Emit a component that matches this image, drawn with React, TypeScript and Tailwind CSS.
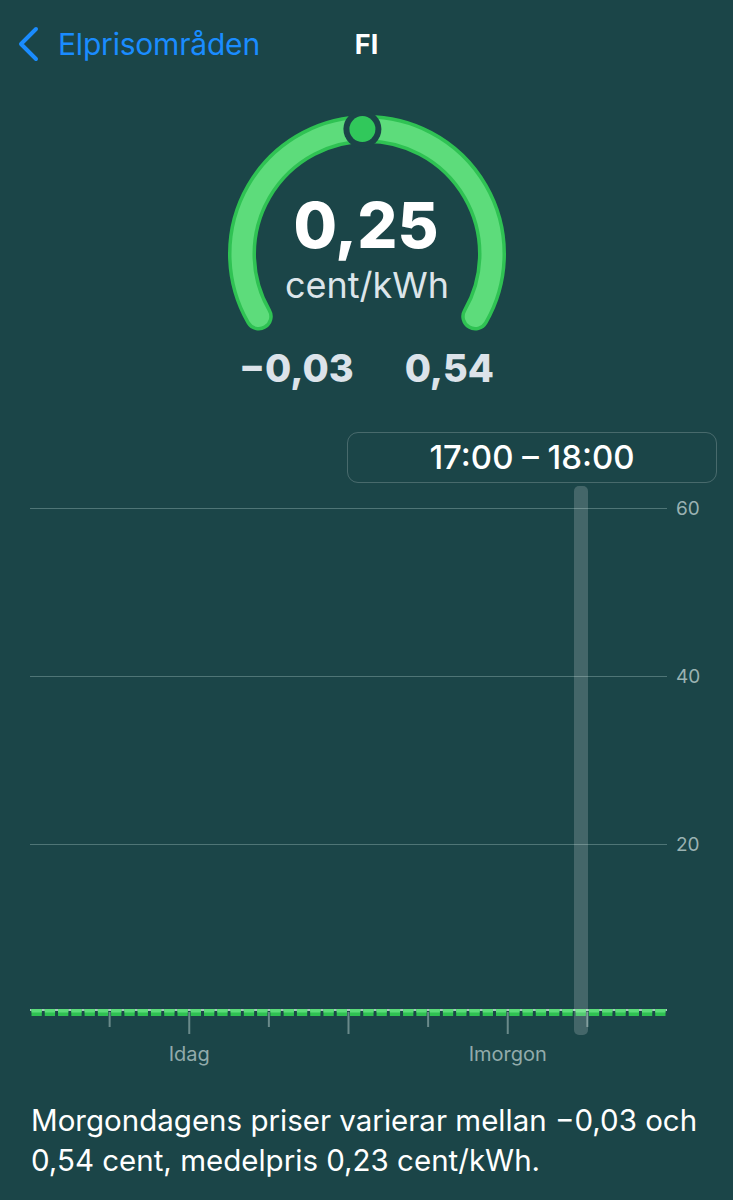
import React from "react";

const BG = "#1b4548";

function Gauge() {
  const cx = 150, cy = 154, r = 125;
  const a = (210 - ((0.25 + 0.03) / 0.57) * 240) * (Math.PI / 180);
  const dx = cx + r * Math.cos(a);
  const dy = cy - r * Math.sin(a);
  const path = `M ${cx + r * Math.cos((210 * Math.PI) / 180)} ${cy - r * Math.sin((210 * Math.PI) / 180)} A ${r} ${r} 0 1 1 ${cx + r * Math.cos((-30 * Math.PI) / 180)} ${cy - r * Math.sin((-30 * Math.PI) / 180)}`;
  return (
    <svg width="300" height="240" viewBox="0 0 300 240" className="block">
      <path d={path} fill="none" stroke="#2fc253" strokeWidth="28" strokeLinecap="round" />
      <path d={path} fill="none" stroke="#5ddc7b" strokeWidth="21" strokeLinecap="round" />
      <circle cx={dx} cy={dy} r="19" fill={BG} />
      <circle cx={dx} cy={dy} r="13" fill="#31c85b" />
      <text x="149" y="148" textAnchor="middle" fill="#ffffff" fontFamily="Inter, 'Liberation Sans', sans-serif" fontWeight="800" fontSize="63">0,25</text>
      <text x="150" y="198" textAnchor="middle" fill="#dde5ea" fontFamily="Inter, 'Liberation Sans', sans-serif" fontWeight="400" fontSize="36">cent/kWh</text>
    </svg>
  );
}

function Chart() {
  const top = 484;
  const x0 = 30, x1 = 667;
  const bw = (x1 - x0) / 48;
  const y0 = 1013 - top;
  const grid = [
    { v: "60", y: 509 - top },
    { v: "40", y: 677 - top },
    { v: "20", y: 845 - top },
  ];
  const ticks = [6, 12, 18, 24, 30, 36, 42];
  return (
    <svg width="733" height="596" viewBox="0 0 733 596" className="block">
      {grid.map((g) => (
        <g key={g.v}>
          <line x1={x0} x2={x1} y1={g.y + 0.5} y2={g.y + 0.5} stroke="#4f7576" strokeWidth="1" />
          <text x="676" y={g.y + 7} fill="#9ab2b2" fontFamily="Inter, 'Liberation Sans', sans-serif" fontSize="19">{g.v}</text>
        </g>
      ))}
      {ticks.map((h) => (
        <line key={h} x1={x0 + h * bw} x2={x0 + h * bw} y1={y0} y2={h % 12 === 0 ? y0 + 22 : y0 + 15} stroke="#6a8a8a" strokeWidth="2" />
      ))}
      <line x1={x0} x2={x1} y1={y0 - 2} y2={y0 - 2} stroke="#a9c2bf" strokeWidth="2" />
      {Array.from({ length: 48 }).map((_, i) => (
        <g key={i}>
          <rect x={x0 + i * bw + 1.5} y={y0 - 3} width={bw - 3} height="7" fill="#2fc152" />
          <rect x={x0 + i * bw + 1.5} y={y0 - 3} width={bw - 3} height="3.5" fill="#5bdc79" />
        </g>
      ))}
      <rect x="574" y={487 - top} width="14" height={1036 - 487} rx="5" fill="rgba(255,255,255,0.18)" />
      <text x={x0 + 12 * bw} y={1062 - top} textAnchor="middle" fill="#92abab" fontFamily="Inter, 'Liberation Sans', sans-serif" fontSize="20">Idag</text>
      <text x={x0 + 36 * bw} y={1062 - top} textAnchor="middle" fill="#92abab" fontFamily="Inter, 'Liberation Sans', sans-serif" fontSize="20">Imorgon</text>
    </svg>
  );
}

export default function App() {
  return (
    <div className="w-[733px] h-[1200px] overflow-hidden bg-[#1b4548] text-white" style={{ fontFamily: "Inter, 'Liberation Sans', sans-serif" }}>
      <div className="grid grid-cols-[1fr_auto_1fr] items-center h-[88px]">
        <div className="flex items-center pl-[17px] gap-[19px]">
          <svg width="22" height="36" viewBox="0 0 22 36">
            <polyline points="19,3 4,18 19,33" fill="none" stroke="#1a8cff" strokeWidth="4" strokeLinecap="round" strokeLinejoin="round" />
          </svg>
          <span className="text-[30px] text-[#1a8cff] leading-none tracking-[-0.2px]">Elprisområden</span>
        </div>
        <span className="text-[27px] font-bold leading-none">FI</span>
        <div />
      </div>
      <div className="flex justify-center mt-[12px] pl-[1px]">
        <Gauge />
      </div>
      <div className="flex justify-center gap-[51px] mt-[9px] text-[38px] font-extrabold leading-none text-[#dce3ea]">
        <span>−0,03</span>
        <span>0,54</span>
      </div>
      <div className="flex justify-end pr-[16px] mt-[45px]">
        <div className="w-[370px] h-[51px] rounded-[11px] border border-white/20 flex items-center justify-center text-[33px] font-medium leading-none">
          17:00 – 18:00
        </div>
      </div>
      <Chart />
      <p className="px-[31px] mt-[21px] text-[29.5px] leading-[40px] text-white">
        Morgondagens priser varierar mellan −0,03 och 0,54 cent, medelpris 0,23 cent/kWh.
      </p>
    </div>
  );
}
